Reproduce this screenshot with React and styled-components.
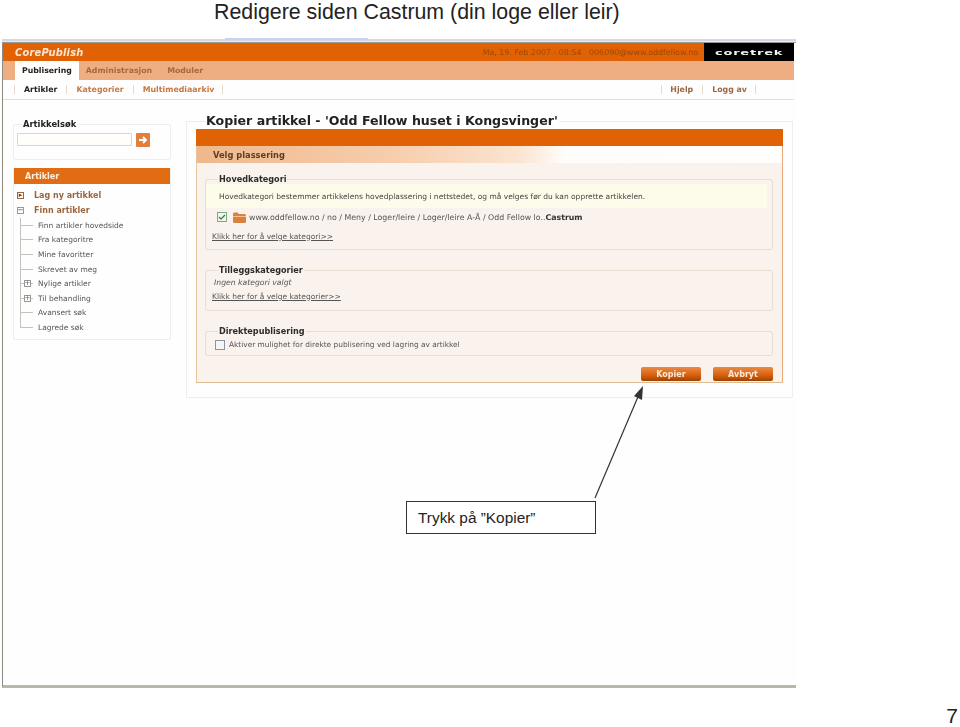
import React from "react";
import styled, { createGlobalStyle } from "styled-components";

const Global = createGlobalStyle`
  html, body { margin: 0; padding: 0; background: #fff; }
  * { box-sizing: border-box; }
`;

const Page = styled.div`
  position: relative;
  width: 960px;
  height: 727px;
  overflow: hidden;
  display: flex;
  flex-direction: column;
  font-family: "Liberation Sans", Arial, sans-serif;
  background: #fff;
`;
const SlideTitle = styled.h1`
  margin: 0;
  height: 38px;
  padding: 1px 0 0 214px;
  font-size: 21.35px;
  line-height: 23px;
  font-weight: 400;
  color: #222;
  white-space: nowrap;
`;
const Shot = styled.div`
  width: 794px;
  height: 650px;
  margin-left: 2px;
  display: flex;
  flex-direction: column;
  background: #fffefe;
  border-left: 1px solid #8b8b80;
  border-bottom: 3px solid #b9b9ab;
  font-family: "DejaVu Sans", Verdana, sans-serif;
  filter: blur(0.45px);
`;
const TopEdge = styled.div`
  height: 5px;
  flex: none;
  margin-left: -1px;
  background:
    linear-gradient(#c8d3ea, #c8d3ea) 223px 0 / 143px 2px no-repeat,
    linear-gradient(#fff 0 1px, #d4d6ea 1px 3px, #e8e8f0 3px 4px, #9a9a90 4px 5px);
`;
const BrandBar = styled.div`
  height: 18px;
  width: 791px;
  flex: none;
  display: flex;
  align-items: center;
  background: #e06204;
`;
const Brand = styled.div`
  padding-left: 12px;
  font-size: 9.9px;
  font-style: italic;
  font-weight: 700;
  color: #fbe6d4;
  letter-spacing: 0.2px;
`;
const Stamp = styled.div`
  margin-left: auto;
  padding-right: 6px;
  font-size: 7.9px;
  color: #9c4708;
  white-space: nowrap;
`;
const VendorLogo = styled.div`
  width: 90px;
  height: 18px;
  display: flex;
  align-items: center;
  justify-content: center;
  background: #000;
`;
const VendorMark = styled.span`
  display: inline-block;
  color: #f4f4f4;
  font-size: 8px;
  font-weight: 700;
  letter-spacing: 0.5px;
  transform: scale(1.62, 0.85);
`;
const TabBar = styled.div`
  height: 19px;
  width: 791px;
  flex: none;
  display: flex;
  padding-left: 12px;
  background: #eeae82;
`;
const Tab = styled.div`
  height: 19px;
  display: flex;
  align-items: center;
  padding: 0 7px;
  margin-right: ${(p) => p.$gap || 0}px;
  font-size: 7.8px;
  font-weight: 700;
  white-space: nowrap;
  color: ${(p) => (p.$active ? "#222" : "#a8683a")};
  background: ${(p) => (p.$active ? "#fffefd" : "transparent")};
`;
const SubBar = styled.div`
  height: 20px;
  width: 791px;
  flex: none;
  display: flex;
  align-items: center;
  border-bottom: 1px solid #eadccd;
  padding-left: 11px;
`;
const SubLink = styled.div`
  height: 9px;
  display: flex;
  align-items: center;
  font-size: 7.85px;
  font-weight: 700;
  line-height: 9px;
  white-space: nowrap;
  color: ${(p) => p.$color || "#c57a44"};
  padding-left: ${(p) => p.$pl}px;
  padding-right: ${(p) => p.$pr}px;
  border-left: ${(p) => (p.$first ? "1px solid #e8d8c4" : "0")};
  border-right: 1px solid #e8d8c4;
`;
const SubSpacer = styled.div`
  flex: ${(p) => (p.$w ? `0 0 ${p.$w}px` : "1")};
`;
const Body = styled.div`
  flex: 1;
  display: flex;
  align-items: flex-start;
  padding: 13px 0 0 10px;
`;
const Sidebar = styled.div`
  width: 158px;
  flex: none;
  margin-top: 4px;
  display: flex;
  flex-direction: column;
  gap: 8px;
`;
const SearchBox = styled.fieldset`
  margin: 0;
  padding: 2px 0 0 3px;
  height: 43px;
  border: 1px solid #f0eeea;
  border-radius: 2px;
  min-width: 0;
`;
const SearchLegend = styled.legend`
  margin-left: 5px;
  padding: 0 1px;
  font-size: 8.4px;
  line-height: 14px;
  font-weight: 700;
  color: #222;
`;
const SearchRow = styled.div`
  display: flex;
  gap: 4px;
  align-items: flex-start;
`;
const SearchInput = styled.div`
  width: 115px;
  height: 13px;
  background: #fffefa;
  border: 1px solid #ecd3ab;
  border-radius: 1px;
`;
const GoButton = styled.div`
  width: 14px;
  height: 14px;
  display: flex;
  align-items: center;
  justify-content: center;
  background: #e0803c;
  border-radius: 1px;
`;
const NavBox = styled.div`
  height: 172px;
  border: 1px solid #f0eeea;
  border-top: 0;
  border-radius: 2px;
`;
const NavHeader = styled.div`
  height: 16px;
  padding-left: 11px;
  display: flex;
  align-items: center;
  background: #e26c14;
  color: #fdeedd;
  font-size: 8px;
  font-weight: 700;
`;
const MainRow = styled.div`
  display: flex;
  align-items: center;
  height: 15px;
  padding-left: 3px;
  gap: 10px;
  font-size: 8px;
  font-weight: 700;
  color: #9c6640;
`;
const MainRows = styled.div`
  padding-top: 4px;
`;
const SubList = styled.div`
  margin-left: 6px;
`;
const SubItem = styled.div`
  height: 14.6px;
  display: flex;
  align-items: center;
  padding-left: ${(p) => (p.$box ? 4 : 18)}px;
  gap: 7px;
  font-size: 7.5px;
  color: #555;
  white-space: nowrap;
  background:
    linear-gradient(#c4c0ba, #c4c0ba) 0 0 / 1px ${(p) => (p.$last ? "50%" : "100%")} no-repeat,
    linear-gradient(#c4c0ba, #c4c0ba) 0 50% / 13px 1px no-repeat;
`;
const MiniBox = styled.span`
  width: 7px;
  height: 7px;
  flex: none;
  display: inline-flex;
  align-items: center;
  justify-content: center;
  background: #fff;
  border: 1px solid ${(p) => p.$color || "#999"};
  color: ${(p) => p.$text || "#666"};
  font-size: 7px;
  line-height: 5px;
`;
const Panel = styled.fieldset`
  margin: 0 0 0 15px;
  padding: 0 9px 15px 9px;
  width: 607px;
  height: 285px;
  border: 1px solid #eeeeec;
  min-width: 0;
`;
const PanelLegend = styled.legend`
  margin-left: 9px;
  padding: 0 1px;
  font-size: 12.6px;
  line-height: 16px;
  font-weight: 700;
  color: #222;
  white-space: nowrap;
`;
const Card = styled.div`
  height: 254px;
  display: flex;
  flex-direction: column;
  background: #f9f2ed;
  border: 1px solid #eaa978;
  border-top: 0;
  border-left-color: #e6c49e;
  border-bottom: 1px solid #dcbc90;
`;
const CardBar = styled.div`
  height: 17px;
  flex: none;
  margin: 0 -1px;
  background: #e06204;
`;
const CardStrip = styled.div`
  height: 17px;
  flex: none;
  display: flex;
  align-items: center;
  padding-left: 16px;
  font-size: 8.3px;
  font-weight: 700;
  color: #5d3d24;
  background: linear-gradient(90deg, #efb88c 0%, #f6cfae 35%, #fbe4d0 55%, #fffdfb 63%, #fffefd 100%);
`;
const Group = styled.fieldset`
  margin: ${(p) => p.$top}px 9px 0 8px;
  padding: 0;
  height: ${(p) => p.$h}px;
  flex: none;
  min-width: 0;
  border: 1px solid #e8ddd0;
  border-radius: 3px;
`;
const GroupLegend = styled.legend`
  margin-left: 12px;
  padding: 0 1px;
  font-size: 8.15px;
  line-height: 12px;
  font-weight: 700;
  color: #2c2c2c;
`;
const Note = styled.div`
  height: 24px;
  margin: -1px 5px 0 0;
  padding-left: 13px;
  display: flex;
  align-items: center;
  background: #fdfbe9;
  font-size: 7.5px;
  color: #444;
  white-space: nowrap;
`;
const PathRow = styled.div`
  height: 18px;
  padding-left: 11px;
  display: flex;
  align-items: center;
  font-size: 7.85px;
  color: #555;
  white-space: nowrap;
  b { color: #333; }
`;
const TickBox = styled.span`
  width: 10px;
  height: 10px;
  flex: none;
  margin-right: ${(p) => p.$mr}px;
  display: inline-flex;
  align-items: center;
  justify-content: center;
  background: ${(p) => p.$bg || "#fff"};
  border: 1px solid ${(p) => p.$color};
`;
const GroupLink = styled.div`
  height: 14px;
  margin-top: ${(p) => p.$top || 0}px;
  padding-left: 6px;
  display: flex;
  align-items: center;
  font-size: 7.5px;
  color: #555;
  text-decoration: underline;
  white-space: nowrap;
`;
const Hint = styled.div`
  height: 13px;
  padding-left: 8px;
  display: flex;
  align-items: center;
  font-size: 7.7px;
  font-style: italic;
  color: #555;
`;
const CheckRow = styled.div`
  height: 15px;
  padding-left: 9px;
  display: flex;
  align-items: center;
  font-size: 7.4px;
  color: #555;
  white-space: nowrap;
`;
const Actions = styled.div`
  margin: 11px 9px 0 0;
  display: flex;
  justify-content: flex-end;
  gap: 12px;
`;
const Btn = styled.div`
  width: 60px;
  height: 14px;
  display: flex;
  align-items: center;
  justify-content: center;
  border-radius: 2px;
  background: linear-gradient(#ea8a46, #d85f0c 60%, #9c4206);
  color: #fde9d6;
  font-size: 8px;
  font-weight: 700;
`;
const Callout = styled.div`
  position: absolute;
  left: 406px;
  top: 501px;
  width: 190px;
  height: 33px;
  padding-left: 11px;
  display: flex;
  align-items: center;
  background: #fff;
  border: 1px solid #333;
  font-size: 15.4px;
  color: #222;
`;
const ArrowLayer = styled.svg`
  position: absolute;
  left: 590px;
  top: 380px;
`;
const PageNo = styled.div`
  margin-top: 16px;
  padding-right: 2px;
  text-align: right;
  font-size: 21px;
  line-height: 23px;
  color: #222;
`;

const Chevron = () => (
  <svg width="10" height="10" viewBox="0 0 10 10">
    <path d="M1 5h7M5 2l3 3-3 3" fill="none" stroke="#fff" strokeWidth="1.8" />
  </svg>
);
const Tick = () => (
  <svg width="8" height="8" viewBox="0 0 8 8">
    <path d="M1 4l2 2 4-4" fill="none" stroke="#3a8a3a" strokeWidth="1.3" />
  </svg>
);
const Folder = () => (
  <svg width="13" height="11" viewBox="0 0 13 11" style={{ marginRight: 3 }}>
    <path d="M0 2q0-1.500 1.500-1.500h3l1.500 1.500h5.500q1.500 0 1.500 1.500v6q0 1.500-1.500 1.500h-10q-1.500 0-1.500-1.500z" fill="#d9813f" />
    <path d="M0 4h13v1H0z" fill="#f2c49a" />
  </svg>
);

const subItems = [
  ["Finn artikler hovedside"],
  ["Fra kategoritre"],
  ["Mine favoritter"],
  ["Skrevet av meg"],
  ["Nylige artikler", true],
  ["Til behandling", true],
  ["Avansert søk"],
  ["Lagrede søk"],
];

export default function App() {
  return (
    <Page>
      <Global />
      <SlideTitle>Redigere siden Castrum (din loge eller leir)</SlideTitle>
      <Shot>
        <TopEdge />
        <BrandBar>
          <Brand>CorePublish</Brand>
          <Stamp>Ma, 19. Feb 2007 - 08:54 &nbsp; 006090@www.oddfellow.no</Stamp>
          <VendorLogo><VendorMark>coretrek</VendorMark></VendorLogo>
        </BrandBar>
        <TabBar>
          <Tab $active>Publisering</Tab>
          <Tab $gap={1}>Administrasjon</Tab>
          <Tab>Moduler</Tab>
        </TabBar>
        <SubBar>
          <SubLink $first $color="#222" $pl={9} $pr={9}>Artikler</SubLink>
          <SubLink $pl={9} $pr={9}>Kategorier</SubLink>
          <SubLink $pl={9} $pr={8}>Multimediaarkiv</SubLink>
          <SubSpacer />
          <SubLink $first $color="#9c6640" $pl={8} $pr={9}>Hjelp</SubLink>
          <SubLink $color="#9c6640" $pl={9} $pr={8}>Logg av</SubLink>
          <SubSpacer $w={38} />
        </SubBar>
        <Body>
          <Sidebar>
            <SearchBox>
              <SearchLegend>Artikkelsøk</SearchLegend>
              <SearchRow>
                <SearchInput />
                <GoButton><Chevron /></GoButton>
              </SearchRow>
            </SearchBox>
            <NavBox>
              <NavHeader>Artikler</NavHeader>
              <MainRows>
                <MainRow>
                  <MiniBox $color="#9c6640" $text="#7a3c10">▸</MiniBox>
                  Lag ny artikkel
                </MainRow>
                <MainRow>
                  <MiniBox $color="#c98a58" $text="#a55a20">−</MiniBox>
                  Finn artikler
                </MainRow>
              </MainRows>
              <SubList>
                {subItems.map(([label, box], i) => (
                  <SubItem key={label} $box={box} $last={i === subItems.length - 1}>
                    {box && <MiniBox>+</MiniBox>}
                    {label}
                  </SubItem>
                ))}
              </SubList>
            </NavBox>
          </Sidebar>
          <Panel>
            <PanelLegend>Kopier artikkel - 'Odd Fellow huset i Kongsvinger'</PanelLegend>
            <Card>
              <CardBar />
              <CardStrip>Velg plassering</CardStrip>
              <Group $top={10} $h={77}>
                <GroupLegend>Hovedkategori</GroupLegend>
                <Note>Hovedkategori bestemmer artikkelens hovedplassering i nettstedet, og må velges før du kan opprette artikkelen.</Note>
                <PathRow>
                  <TickBox $mr={6} $color="#7fa88a" $bg="#eef8ee"><Tick /></TickBox>
                  <Folder />
                  www.oddfellow.no / no / Meny / Loger/leire / Loger/leire A-Å / Odd Fellow lo..<b>Castrum</b>
                </PathRow>
                <GroupLink $top={3}>Klikk her for å velge kategori&gt;&gt;</GroupLink>
              </Group>
              <Group $top={14} $h={47}>
                <GroupLegend>Tilleggskategorier</GroupLegend>
                <Hint>Ingen kategori valgt</Hint>
                <GroupLink>Klikk her for å velge kategorier&gt;&gt;</GroupLink>
              </Group>
              <Group $top={14} $h={31}>
                <GroupLegend>Direktepublisering</GroupLegend>
                <CheckRow>
                  <TickBox $mr={4} $color="#8a93a0" $bg="#f4f5f7" />
                  Aktiver mulighet for direkte publisering ved lagring av artikkel
                </CheckRow>
              </Group>
              <Actions>
                <Btn>Kopier</Btn>
                <Btn>Avbryt</Btn>
              </Actions>
            </Card>
          </Panel>
        </Body>
      </Shot>
      <PageNo>7</PageNo>
      <ArrowLayer width="60" height="125" viewBox="0 0 60 125">
        <path d="M5 118L50 12" fill="none" stroke="#333" strokeWidth="1.2" />
        <path d="M53 6l-1 14-8-4z" fill="#333" />
      </ArrowLayer>
      <Callout>Trykk på ”Kopier”</Callout>
    </Page>
  );
}
